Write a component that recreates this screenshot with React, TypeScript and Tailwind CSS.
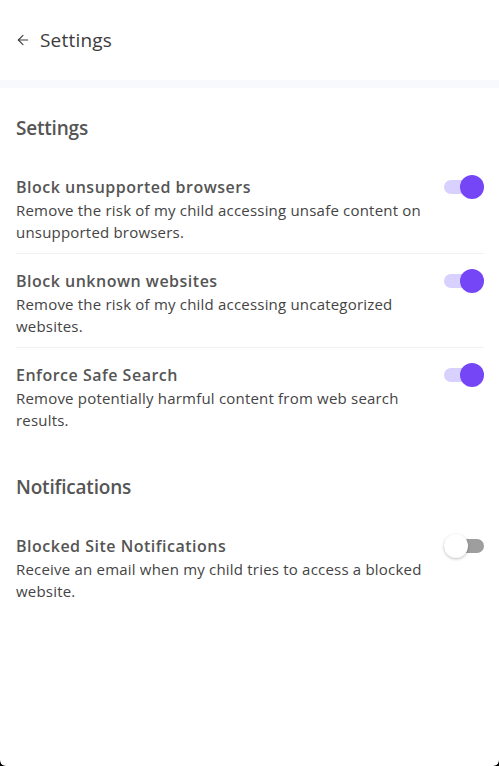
import { ArrowLeft } from "lucide-react";

type Setting = {
    title: string;
    description: string;
    enabled: boolean;
};

const mainSettings: Setting[] = [
    {
        title: "Block unsupported browsers",
        description: "Remove the risk of my child accessing unsafe content on unsupported browsers.",
        enabled: true,
    },
    {
        title: "Block unknown websites",
        description: "Remove the risk of my child accessing uncategorized websites.",
        enabled: true,
    },
    {
        title: "Enforce Safe Search",
        description: "Remove potentially harmful content from web search results.",
        enabled: true,
    },
];

const notificationSettings: Setting[] = [
    {
        title: "Blocked Site Notifications",
        description: "Receive an email when my child tries to access a blocked website.",
        enabled: false,
    },
];

export default function App() {
    return (
        <div className="w-[499px] h-[766px] bg-black" style={{ fontFamily: '"Open Sans", sans-serif' }}>
            <div className="h-full bg-white rounded-b-[6px] overflow-hidden flex flex-col">
                <div className="h-[80px] flex flex-row items-center gap-[9px] px-[15px] text-[#3c3c3c]">
                    <ArrowLeft size={16} strokeWidth={1.6} />
                    <span className="text-[19px] tracking-[0.2px]">Settings</span>
                </div>
                <div className="h-[8px] bg-[#f8f9fc]"></div>

                <div className="pl-[16px] pr-[15px] pt-[26px]">
                    <SectionTitle title="Settings" />
                    <div className="mt-[33px]">
                        {mainSettings.map((s, i) => (
                            <SettingRow key={s.title} setting={s} first={i === 0} divider={i < mainSettings.length - 1} />
                        ))}
                    </div>

                    <div className="mt-[32px]">
                        <SectionTitle title="Notifications" />
                    </div>
                    <div className="mt-[33px]">
                        {notificationSettings.map((s, i) => (
                            <SettingRow key={s.title} setting={s} first={i === 0} divider={false} />
                        ))}
                    </div>
                </div>
            </div>
        </div>
    );
}

function SectionTitle({ title }: { title: string }) {
    return <h2 className="text-[19px] font-semibold leading-[28px] text-[#555555] tracking-[-0.2px]">{title}</h2>;
}

function SettingRow({ setting, first, divider }: { setting: Setting; first: boolean; divider: boolean }) {
    return (
        <div
            className={`flex flex-row justify-between pb-[10px] ${first ? "" : "pt-[15px]"} ${
                divider ? "border-b border-[#f1f1f1]" : ""
            }`}
        >
            <div className="flex flex-col flex-1">
                <span className="text-[16px] font-semibold leading-[24px] text-[#555555] tracking-[0.5px]">
                    {setting.title}
                </span>
                <p className="text-[15px] leading-[22px] text-[#444444] tracking-[0.2px]">{setting.description}</p>
            </div>
            <Toggle on={setting.enabled} />
        </div>
    );
}

function Toggle({ on }: { on: boolean }) {
    return (
        <div className="relative w-[40px] h-[24px] shrink-0">
            <div className={`absolute left-0 right-0 top-[5px] h-[14px] rounded-full ${on ? "bg-[#d8d0fe]" : "bg-[#9e9e9e]"}`}></div>
            <div
                className={`absolute top-0 w-[24px] h-[24px] rounded-full ${
                    on ? "left-[16px] bg-[#7446f6]" : "left-0 bg-white shadow-[0_1px_3px_rgba(0,0,0,0.25)]"
                }`}
            ></div>
        </div>
    );
}
